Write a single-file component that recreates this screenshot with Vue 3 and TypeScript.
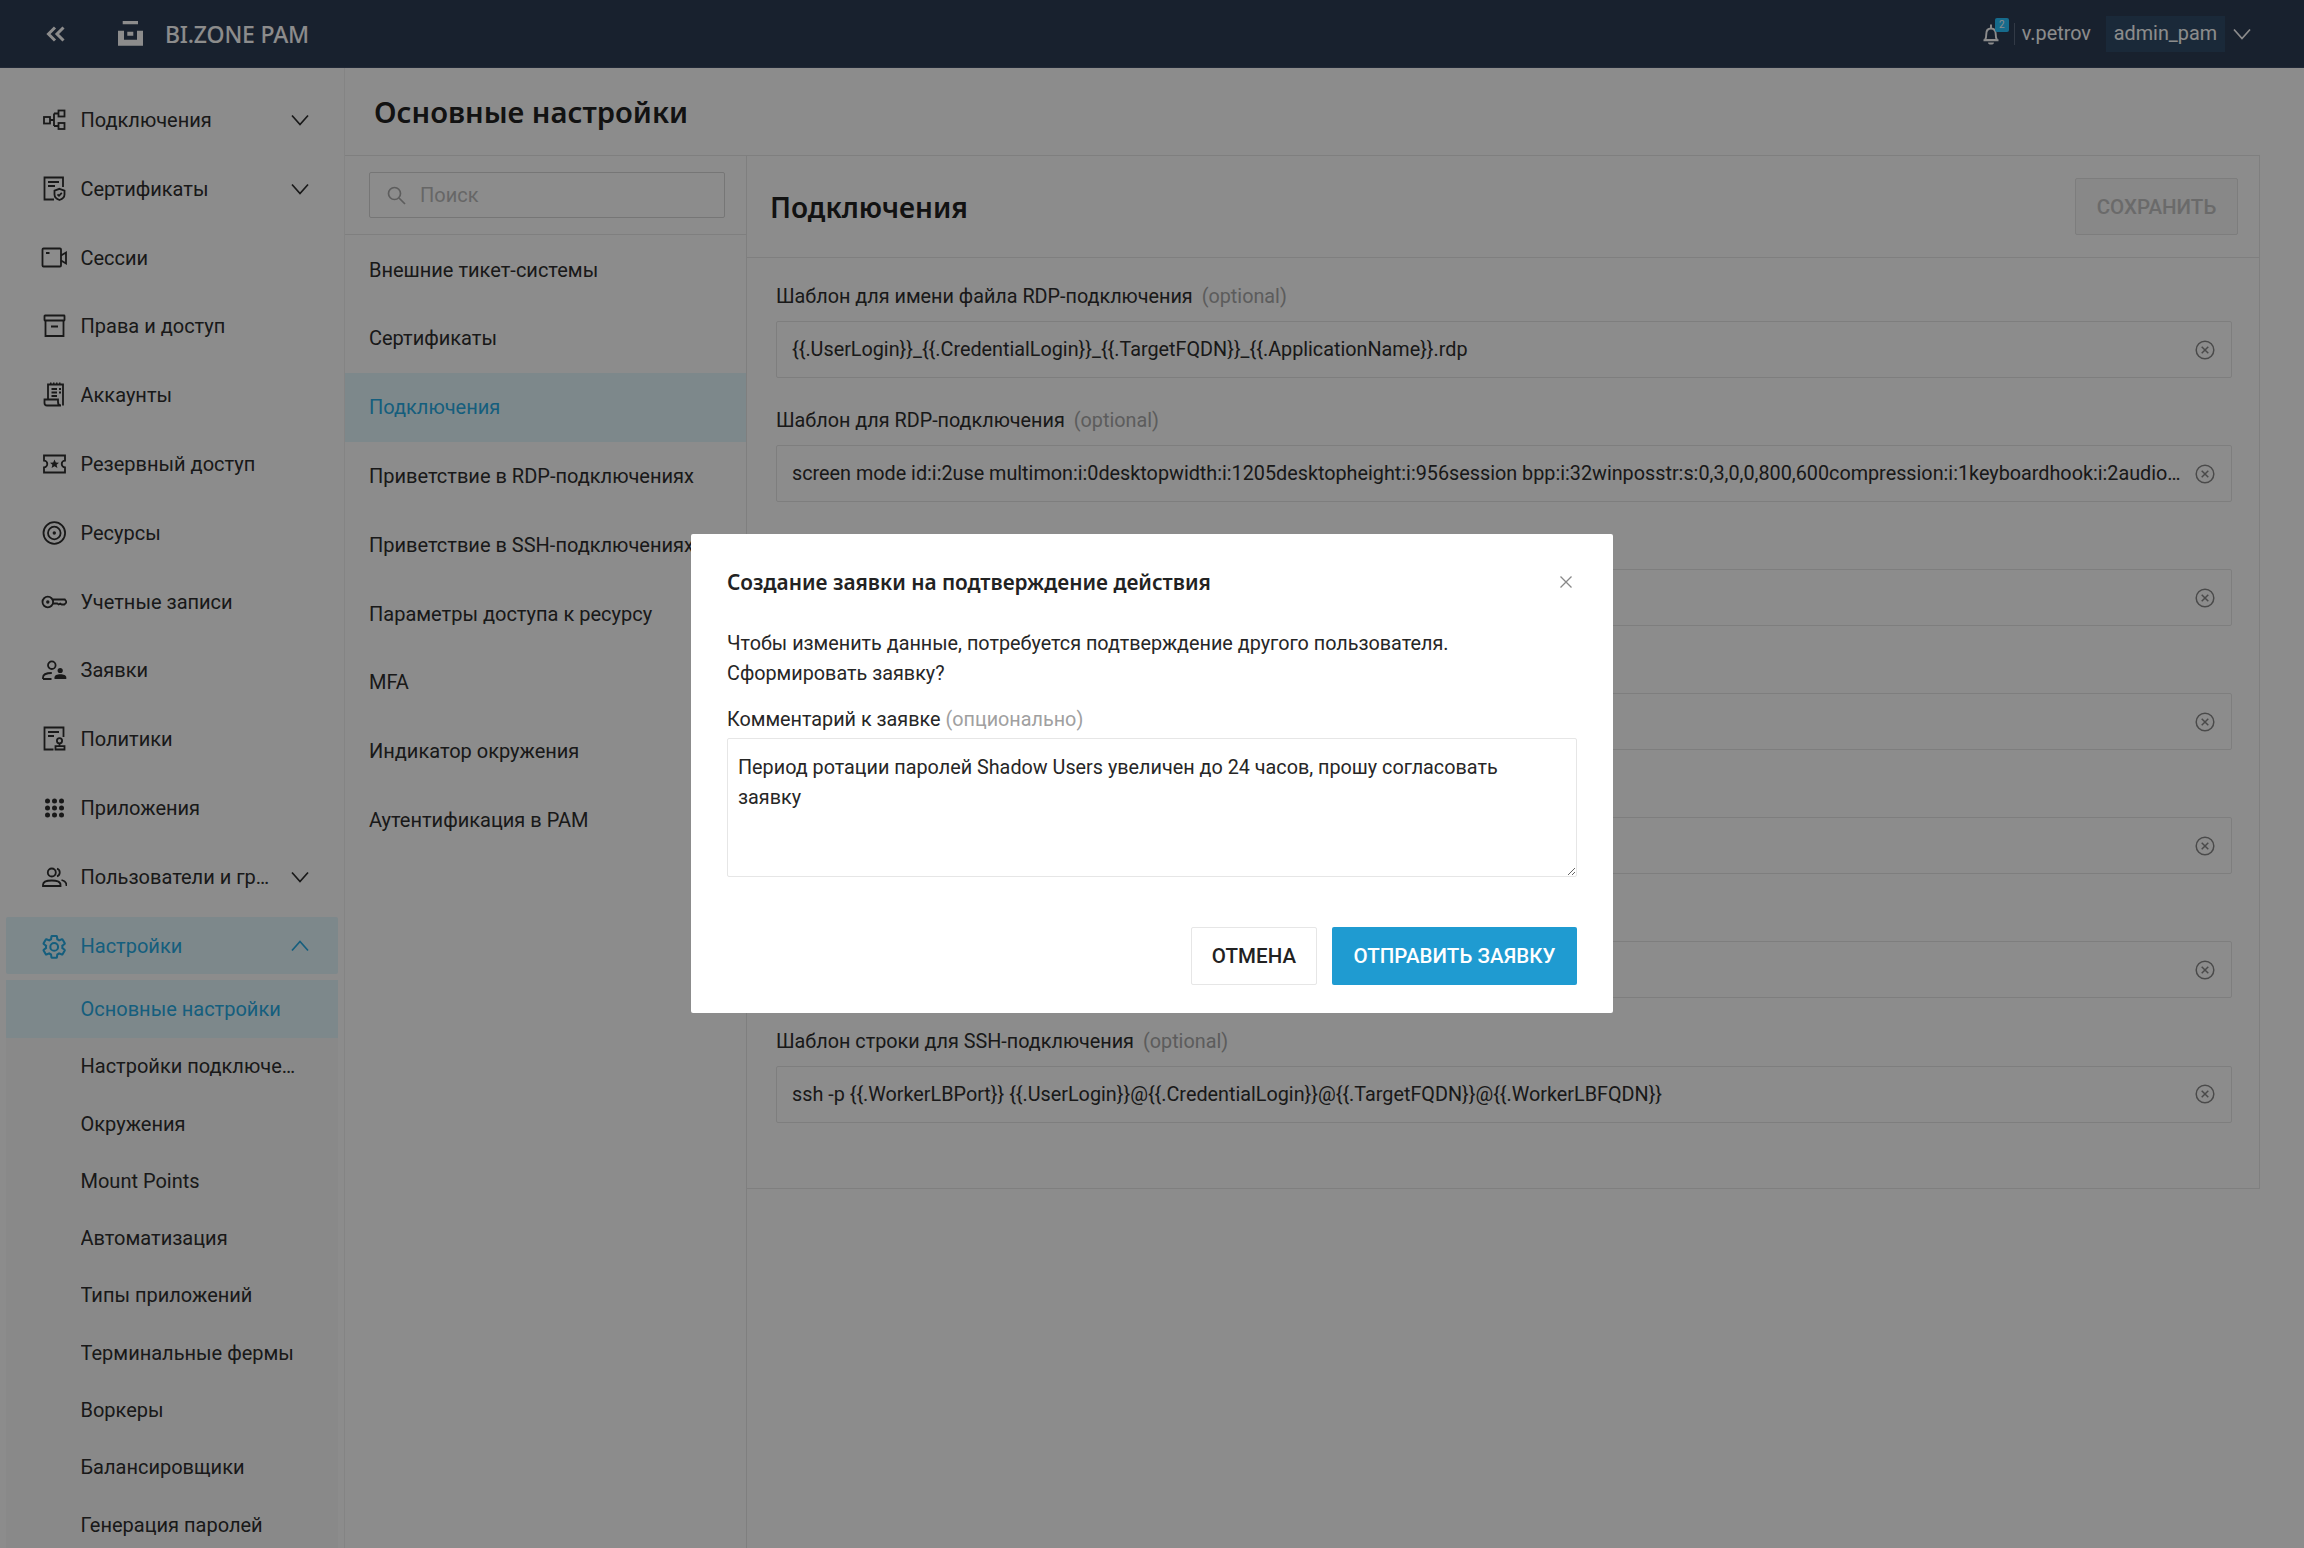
<script setup lang="ts">
const gear = 'M19.14 12.94c.04-.3.06-.61.06-.94 0-.32-.02-.64-.07-.94l2.03-1.58c.18-.14.23-.41.12-.61l-1.92-3.32c-.12-.22-.37-.29-.59-.22l-2.39.96c-.5-.38-1.03-.7-1.62-.94l-.36-2.54c-.04-.24-.24-.41-.48-.41h-3.84c-.24 0-.43.17-.47.41l-.36 2.54c-.59.24-1.13.57-1.62.94l-2.39-.96c-.22-.08-.47 0-.59.22L2.74 8.87c-.12.21-.08.47.12.61l2.03 1.58c-.05.3-.09.63-.09.94s.02.64.07.94l-2.03 1.58c-.18.14-.23.41-.12.61l1.92 3.32c.12.22.37.29.59.22l2.39-.96c.5.38 1.03.7 1.62.94l.36 2.54c.05.24.24.41.48.41h3.84c.24 0 .44-.17.47-.41l.36-2.54c.59-.24 1.13-.56 1.62-.94l2.39.96c.22.08.47 0 .59-.22l1.92-3.32c.12-.22.07-.47-.12-.61l-2.01-1.58z'

const icons: Record<string, string> = {
  links: '<rect x="3" y="10" width="6" height="6.5"/><rect x="17.5" y="3.5" width="6" height="6"/><rect x="17.5" y="16" width="6" height="6"/><path d="M9 13h4M13 6.500v12.500M13 6.500h4.500M13 19h4.500"/>',
  cert: '<path d="M22 11V1.500H3.500V23.500H13"/><path d="M7 6h11M7 10h7"/><path d="M18.500 12.800l5 1.800v4c0 2.900-2.400 4.500-5 5.400-2.600-.9-5-2.500-5-5.400v-4z"/><path d="M16.500 18.300l1.500 1.500 2.800-2.900"/>',
  video: '<rect x="1.500" y="3.500" width="18.500" height="18" rx="1"/><path d="M20 10.500l5-3v11l-5-3M5 8h3.500"/>',
  box: '<rect x="3.500" y="2.500" width="20" height="5" rx=".5"/><path d="M4.500 7.500V23h18V7.500M10 13.500h7"/>',
  account: '<path d="M7 17.500V2.500h15V23.500M9 1.500h1.500M12 1.500h1.500M15 1.500h1.500M18 1.500h1.500"/><path d="M3.500 17.500H17v2.500c0 2 1 3.500 3 3.500H6c-1.500 0-2.500-1-2.500-2.500z"/><path d="M10.500 7H16M18 7h2M10.500 10.500H16M18 10.500h2M10.500 14H16"/>',
  ticket: '<path d="M3 4.500h21v5.200a3.300 3.300 0 0 0 0 6.600v5.200H3v-5.200a3.300 3.300 0 0 0 0-6.600z"/><path class="solid" d="M13.500 8.500l1.300 3 3.200.3-2.400 2 .8 3.200-2.900-1.700-2.900 1.700.8-3.200-2.400-2 3.200-.3z"/>',
  target: '<circle cx="13.300" cy="13" r="10.800"/><circle cx="13.300" cy="13" r="6.300"/><circle class="solid" cx="13.300" cy="13" r="1.700"/>',
  key: '<circle cx="6.800" cy="13" r="5.300"/><circle class="solid" cx="6.800" cy="13" r="1.700"/><path d="M12 10.500h11.800l1.900 2.500-2.400 2.500h-2.600l-1.500-1-1.500 1-1.500-1H12"/>',
  claim: '<circle cx="10.800" cy="8.200" r="3.800"/><path d="M2 22v-1.500c0-3.300 4-4.500 8.800-4.500M2 22h8.500"/><circle class="solid" cx="19.200" cy="13.500" r="2.600"/><path class="solid" d="M13.500 22v-1.500c0-2.300 2.500-3.300 5.800-3.300s6 1 6 3.300V22z"/>',
  policy: '<path d="M22.500 11V1.500h-19v22h9"/><path d="M7 6h11M7 10h6"/><circle cx="18.500" cy="14.800" r="2.600"/><path d="M18.500 17.400V20M14.500 20.200h9v3.300h-9z"/>',
  apps: '<g class="solid"><circle cx="6.500" cy="6" r="2.500"/><circle cx="13.500" cy="6" r="2.500"/><circle cx="20.500" cy="6" r="2.500"/><circle cx="6.500" cy="13" r="2.500"/><circle cx="13.500" cy="13" r="2.500"/><circle cx="20.500" cy="13" r="2.500"/><circle cx="6.500" cy="20" r="2.500"/><circle cx="13.500" cy="20" r="2.500"/><circle cx="20.500" cy="20" r="2.500"/></g>',
  users: '<circle cx="10.800" cy="8.500" r="4"/><path d="M2 22v-1.200c0-3.300 4.200-4.300 8.800-4.300s8.700 1 8.700 4.300V22z"/><path d="M16 4.700a4 4 0 0 1 0 7.600M20.500 16c3 .8 5 2 5 5.500V22"/>',
  gear: `<g transform="translate(-.5 .2) scale(1.14)"><path d="${gear}"/><circle cx="12" cy="12" r="3.400"/></g>`,
}

const menu = [
  { label: 'Подключения', icon: 'links', arrow: true },
  { label: 'Сертификаты', icon: 'cert', arrow: true },
  { label: 'Сессии', icon: 'video' },
  { label: 'Права и доступ', icon: 'box' },
  { label: 'Аккаунты', icon: 'account' },
  { label: 'Резервный доступ', icon: 'ticket' },
  { label: 'Ресурсы', icon: 'target' },
  { label: 'Учетные записи', icon: 'key' },
  { label: 'Заявки', icon: 'claim' },
  { label: 'Политики', icon: 'policy' },
  { label: 'Приложения', icon: 'apps' },
  { label: 'Пользователи и группы', icon: 'users', arrow: true },
]

const subItems = [
  'Основные настройки',
  'Настройки подключений',
  'Окружения',
  'Mount Points',
  'Автоматизация',
  'Типы приложений',
  'Терминальные фермы',
  'Воркеры',
  'Балансировщики',
  'Генерация паролей',
]

const sections = [
  'Внешние тикет-системы',
  'Сертификаты',
  'Подключения',
  'Приветствие в RDP-подключениях',
  'Приветствие в SSH-подключениях',
  'Параметры доступа к ресурсу',
  'MFA',
  'Индикатор окружения',
  'Аутентификация в PAM',
]

const fields = [
  { label: 'Шаблон для имени файла RDP-подключения', value: '{{.UserLogin}}_{{.CredentialLogin}}_{{.TargetFQDN}}_{{.ApplicationName}}.rdp' },
  { label: 'Шаблон для RDP-подключения', value: 'screen mode id:i:2use multimon:i:0desktopwidth:i:1205desktopheight:i:956session bpp:i:32winposstr:s:0,3,0,0,800,600compression:i:1keyboardhook:i:2audiocapturemode:i:0videoplaybackmode:i:1' },
  { label: 'Шаблон для имени файла SSH-подключения', value: '' },
  { label: 'Шаблон для SSH-ключа', value: '' },
  { label: 'Шаблон для SFTP-подключения', value: '' },
  { label: 'Шаблон для SCP-подключения', value: '' },
  { label: 'Шаблон строки для SSH-подключения', value: 'ssh -p {{.WorkerLBPort}} {{.UserLogin}}@{{.CredentialLogin}}@{{.TargetFQDN}}@{{.WorkerLBFQDN}}' },
]

const comment = 'Период ротации паролей Shadow Users увеличен до 24 часов, прошу согласовать заявку'
</script>

<template>
  <div class="app">
    <header class="topbar">
      <svg class="collapse" width="20" height="16" viewBox="0 0 20 16"><path d="M9 1.500L2.500 8 9 14.500M17.500 1.500L11 8l6.500 6.500" /></svg>
      <svg class="logo" width="25" height="25" viewBox="0 0 25 25"><path d="M4.700 0H20v3.300H4.700zM0 9.700h6v9h13v-9h6v15H0zM9.300 10.700h6v4h-6z" /></svg>
      <span class="brand">BI.ZONE PAM</span>
      <div class="top-right">
        <span class="bell">
          <svg width="20" height="22" viewBox="0 0 20 22"><path d="M4 17c1-1.500 1.300-3 1.300-6 0-3.500 2-5.500 4.700-5.500s4.700 2 4.700 5.500c0 3 .3 4.500 1.300 6zM2.500 17.300h15M8 19.500c0 1.500 4 1.500 4 0M10 5.500V1.500" /></svg>
          <span class="badge">2</span>
        </span>
        <span class="sep"></span>
        <span class="user">v.petrov</span>
        <span class="role">admin_pam</span>
        <svg class="chev" width="18" height="12" viewBox="0 0 18 12"><path d="M1 1.500l8 9 8-9" /></svg>
      </div>
    </header>

    <div class="body">
      <aside class="sidebar">
        <div v-for="item in menu" :key="item.label" class="menu-item">
          <svg class="micon" width="26" height="26" viewBox="0 0 26 26" v-html="icons[item.icon]"></svg>
          <span class="menu-label">{{ item.label }}</span>
          <svg v-if="item.arrow" class="chev" width="18" height="12" viewBox="0 0 18 12"><path d="M1 1.500l8 9 8-9" /></svg>
        </div>
        <div class="menu-item active">
          <svg class="micon" width="26" height="26" viewBox="0 0 26 26" v-html="icons.gear"></svg>
          <span class="menu-label">Настройки</span>
          <svg class="chev" width="18" height="12" viewBox="0 0 18 12"><path d="M1 10.500l8-9 8 9" /></svg>
        </div>
        <ul class="sub">
          <li v-for="(s, i) in subItems" :key="s" :class="{ on: i === 0 }"><span class="sub-text">{{ s }}</span></li>
        </ul>
      </aside>

      <main class="main">
        <h1 class="page-title">Основные настройки</h1>
        <div class="content">
          <nav class="sections">
            <div class="search-wrap">
              <div class="search">
                <svg width="19" height="19" viewBox="0 0 19 19"><circle cx="7.500" cy="7.500" r="6" /><path d="M12 12l6 6" /></svg>
                <span>Поиск</span>
              </div>
            </div>
            <a v-for="s in sections" :key="s" class="section" :class="{ on: s === 'Подключения' }">{{ s }}</a>
          </nav>
          <section class="panel">
            <div class="panel-head">
              <h2>Подключения</h2>
              <button class="save" disabled>СОХРАНИТЬ</button>
            </div>
            <div class="fields">
              <div v-for="f in fields" :key="f.label" class="field">
                <div class="label">{{ f.label }}<span class="opt">(optional)</span></div>
                <div class="input">
                  <span class="val">{{ f.value }}</span>
                  <svg width="20" height="20" viewBox="0 0 20 20"><circle cx="10" cy="10" r="8.800" /><path d="M6.700 6.700l6.600 6.600M13.300 6.700l-6.600 6.600" /></svg>
                </div>
              </div>
            </div>
          </section>
        </div>
      </main>
    </div>

    <div class="overlay">
      <div class="modal">
        <div class="modal-head">
          <h3>Создание заявки на подтверждение действия</h3>
          <svg width="12" height="12" viewBox="0 0 12 12"><path d="M.5.500l11 11M11.500.500l-11 11" /></svg>
        </div>
        <p class="modal-text">Чтобы изменить данные, потребуется подтверждение другого пользователя.<br />Сформировать заявку?</p>
        <div class="modal-label">Комментарий к заявке <span>(опционально)</span></div>
        <textarea class="area" :value="comment"></textarea>
        <div class="modal-foot">
          <button class="btn cancel">ОТМЕНА</button>
          <button class="btn send">ОТПРАВИТЬ ЗАЯВКУ</button>
        </div>
      </div>
    </div>
  </div>
</template>

<style scoped>
.app {
  position: relative;
  height: 100vh;
  overflow: hidden;
  display: flex;
  flex-direction: column;
  background: #fff;
  color: #2e2e2e;
  font-family: Roboto, "Liberation Sans", sans-serif;
  font-size: 20px;
}
.topbar {
  flex: 0 0 68px;
  height: 68px;
  background: #2d3c55;
  border-bottom: 1px solid #3d4c65;
  box-sizing: border-box;
  display: flex;
  align-items: center;
  color: #fff;
  padding-left: 46px;
}
.collapse { fill: none; stroke: #fff; stroke-width: 3; }
.logo { fill: #fff; margin-left: 52px; }
.brand { margin-left: 22px; font-size: 23px; font-weight: 500; font-family: "Noto Sans", sans-serif; letter-spacing: -.2px; }
.top-right { margin-left: auto; display: flex; align-items: center; padding-right: 53px; font-size: 19.800px; }
.bell { position: relative; display: flex; margin-right: 13px; }
.bell svg { fill: none; stroke: #fff; stroke-width: 1.900; }
.badge {
  position: absolute;
  left: 14px;
  top: -5px;
  width: 14px;
  height: 14px;
  border-radius: 2px;
  background: #28c3ff;
  color: #fff;
  font-size: 10px;
  line-height: 14px;
  text-align: center;
}
.sep { width: 1px; height: 22px; background: #5c6a80; margin-right: 7px; }
.role {
  margin: 0 8px 0 15px;
  height: 36px;
  line-height: 36px;
  padding: 0 8px;
  background: #314c69;
}
.chev { fill: none; stroke: currentColor; stroke-width: 1.700; flex: none; }
.body { flex: 1; display: flex; min-height: 0; }
.sidebar {
  flex: 0 0 345px;
  box-sizing: border-box;
  padding: 23.500px 6px 0;
  border-right: 1px solid #f0f0f0;
  display: flex;
  flex-direction: column;
  gap: 11.800px;
  overflow: hidden;
}
.menu-item {
  flex: 0 0 57px;
  display: flex;
  align-items: center;
  padding: 0 29.500px 0 35px;
  border-radius: 2px;
}
.micon { flex: none; fill: none; stroke: currentColor; stroke-width: 1.800; margin-right: 13.500px; }
.micon :deep(.solid) { fill: currentColor; stroke: none; }
.menu-label { flex: 1; min-width: 0; white-space: nowrap; overflow: hidden; text-overflow: ellipsis; padding-right: 20px; line-height: 30px; }
.menu-item.active { background: #e3f7fe; color: #27ace4; }
.sub { list-style: none; margin: -5.500px 0 0; padding: 0; background: #fafafa; }
.sub li { height: 57.300px; display: flex; align-items: center; padding: 0 36px 0 74.500px; }
.sub-text { white-space: nowrap; overflow: hidden; text-overflow: ellipsis; line-height: 30px; }
.sub li.on { background: #e3f7fe; color: #27ace4; }
.main { flex: 1; min-width: 0; display: flex; flex-direction: column; padding-right: 44px; }
.page-title {
  flex: 0 0 87px;
  box-sizing: border-box;
  margin: 0;
  padding: 2px 0 0 29px;
  line-height: 85px;
  font-family: "Noto Sans", sans-serif;
  font-size: 29.200px;
  font-weight: 600;
  color: #222;
  border-bottom: 1px solid #e8e8e8;
}
.content { flex: 1; display: flex; min-height: 0; }
.sections { flex: 0 0 402px; box-sizing: border-box; border-right: 1px solid #e8e8e8; overflow: hidden; }
.search-wrap { height: 79px; box-sizing: border-box; padding: 16px 21px 0 24px; border-bottom: 1px solid #e8e8e8; margin-bottom: .6px; }
.search {
  height: 46px;
  box-sizing: border-box;
  border: 1.500px solid #d8d8d8;
  border-radius: 2px;
  display: flex;
  align-items: center;
  padding-left: 17px;
  color: #bbb;
}
.search svg { fill: none; stroke: #aaa; stroke-width: 1.700; margin-right: 14px; }
.section {
  display: block;
  height: 68.800px;
  line-height: 68.800px;
  padding-left: 24px;
  white-space: nowrap;
  overflow: hidden;
}
.section.on { background: #e3f7fe; color: #27ace4; }
.panel { flex: 1; min-width: 0; align-self: flex-start; border-right: 1px solid #e8e8e8; border-bottom: 1px solid #e8e8e8; }
.panel-head {
  height: 102px;
  box-sizing: border-box;
  display: flex;
  align-items: center;
  justify-content: space-between;
  padding: 0 21px 0 23px;
  border-bottom: 1px solid #e8e8e8;
}
.panel-head h2 { margin: 0; font-family: "Noto Sans", sans-serif; font-size: 28px; font-weight: 600; color: #222; }
.save {
  width: 163px;
  height: 57px;
  background: #f7f7f7;
  border: 1.500px solid #e3e3e3;
  border-radius: 2px;
  color: #c2c2c2;
  font: 500 20.500px Roboto, sans-serif;
}
.fields { padding: 24px 27px 65px 29px; display: flex; flex-direction: column; gap: 28.100px; font-size: 19.800px; }
.label { line-height: 30px; margin-bottom: 9px; white-space: nowrap; }
.opt { margin-left: 9px; color: #a8a8a8; }
.input {
  height: 57px;
  box-sizing: border-box;
  border: 1.500px solid #e6e6e6;
  border-radius: 2px;
  display: flex;
  align-items: center;
  padding: 0 16px 0 15px;
}
.val { flex: 1; min-width: 0; white-space: nowrap; overflow: hidden; text-overflow: ellipsis; margin-right: 11px; }
.input svg { flex: none; fill: none; stroke: #888; stroke-width: 1.500; }
.overlay {
  position: absolute;
  inset: 0;
  background: rgba(0, 0, 0, .45);
  display: flex;
  align-items: center;
  justify-content: center;
}
.modal {
  width: 922px;
  height: 479px;
  margin-bottom: 1px;
  box-sizing: border-box;
  background: #fff;
  border-radius: 2px;
  padding: 32px 36px 0;
  color: #262626;
  font-size: 19.800px;
}
.modal-head { display: flex; align-items: center; justify-content: space-between; height: 32px; padding-right: 5px; }
.modal-head h3 { margin: 0; font-family: "Noto Sans", sans-serif; font-size: 20.800px; font-weight: 600; color: #222; }
.modal-head svg { fill: none; stroke: #888; stroke-width: 1.300; }
.modal-text { margin: 30.500px 0 0; line-height: 30px; }
.modal-label { margin-top: 16px; line-height: 30px; }
.modal-label span { color: #a0a0a0; }
.area {
  display: block;
  width: 100%;
  height: 139px;
  box-sizing: border-box;
  margin-top: 3.500px;
  border: 1.500px solid #e6e6e6;
  border-radius: 2px;
  padding: 14px 44px 0 10px;
  font: 19.800px/30px Roboto, sans-serif;
  color: #262626;
  resize: vertical;
  outline: none;
}
.modal-foot { display: flex; justify-content: flex-end; gap: 15px; margin-top: 50px; }
.btn { height: 58px; border-radius: 2px; font: 500 20.500px Roboto, sans-serif; letter-spacing: .05px; }
.cancel { width: 126px; background: #fff; border: 1.500px solid #e6e6e6; color: #222; }
.send { width: 245px; background: #1f9bd1; border: 0; color: #fff; }
</style>

<style>
html, body { margin: 0; background: #fff; }
</style>
